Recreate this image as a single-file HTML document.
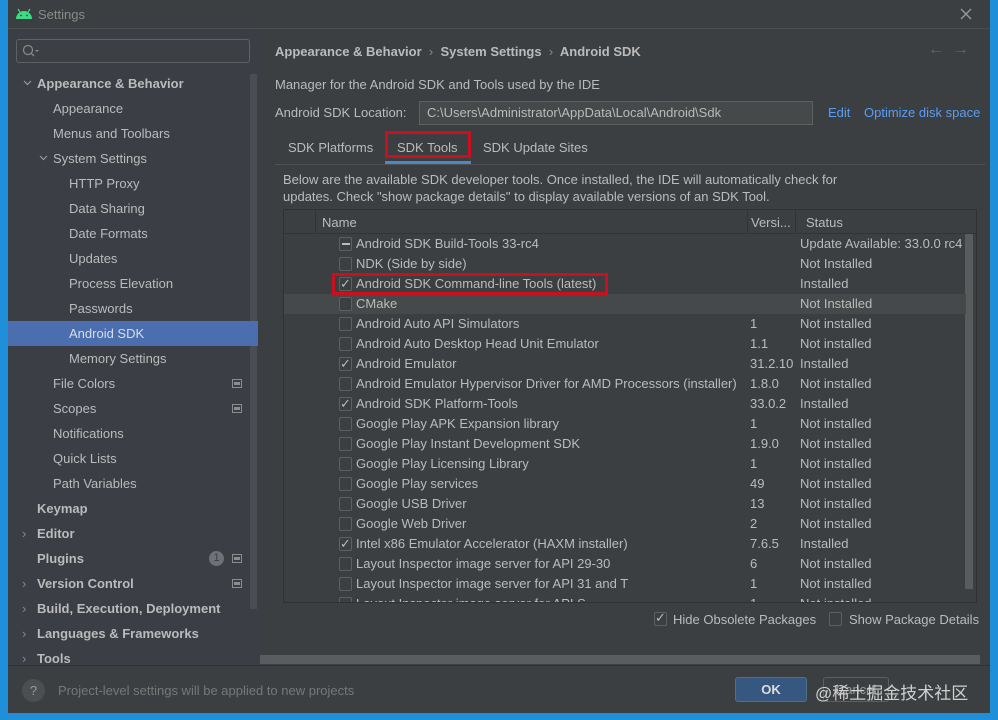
<!DOCTYPE html>
<html><head><meta charset="utf-8"><style>
*{margin:0;padding:0;box-sizing:border-box}
body{width:998px;height:720px;background:#1e8fd8;position:relative;overflow:hidden;font-family:"Liberation Sans",sans-serif;font-size:13px;color:#bbbbbb}
.a{position:absolute;white-space:nowrap}
#win{position:absolute;left:8px;top:0;width:982px;height:713px;background:#3c3f41}
#title{position:absolute;left:0;top:0;width:982px;height:29px;background:#3c3f41;border-bottom:1px solid #4a4d50}
#side{position:absolute;left:0;top:29px;width:252px;height:636px;background:#3b3e45}
.si{position:absolute;height:25px;line-height:25px;white-space:nowrap}
.b{font-weight:bold}
.n{font-family:"Liberation Sans Narrow","Liberation Sans",sans-serif}
.cb{position:absolute;width:13px;height:14px;border:1px solid #5e6060;background:#3c3f41;border-radius:2px}
.row{position:absolute;left:0;width:682px;height:20px;line-height:20px}
.ic{position:absolute;width:10px;height:9px;border:1px solid #8c8c8c}
.ic:after{content:"";position:absolute;left:1px;top:2px;width:6px;height:3px;background:#8c8c8c}
</style></head><body>
<div id="win">
 <div id="title">
  <svg class="a" style="left:7px;top:8px" width="18" height="11" viewBox="0 0 18 11"><path d="M1 11 A8 8 0 0 1 17 11 Z" fill="#3ddc84"/><path d="M3 1 L5 4 M15 1 L13 4" stroke="#3ddc84" stroke-width="1.2"/><circle cx="6" cy="7.5" r="0.9" fill="#3c3f41"/><circle cx="12" cy="7.5" r="0.9" fill="#3c3f41"/></svg>
  <div class="a" style="left:30px;top:7px;color:#8a8a8a">Settings</div>
  <svg class="a" style="left:952px;top:8px" width="12" height="12"><path d="M1 1 L11 11 M11 1 L1 11" stroke="#9a9a9a" stroke-width="1.3"/></svg>
 </div>
 <div id="side">
  <div class="a" style="left:8px;top:10px;width:234px;height:24px;border:1px solid #5e6166;border-radius:3px;background:#3c3f43"></div>
  <svg class="a" style="left:14px;top:15px" width="18" height="14"><circle cx="6" cy="6" r="4.5" stroke="#888" fill="none" stroke-width="1.3"/><path d="M9.5 9.5 L12 12" stroke="#888" stroke-width="1.3"/><path d="M13 6 L17 6 L15 8Z" fill="#888"/></svg>
  <div class="a" style="left:242px;top:45px;width:7px;height:535px;background:#4a4d52"></div>
  <div class="a" style="left:0;top:292px;width:250px;height:25px;background:#4b6eaf"></div>
 </div>
 <div style="position:absolute;left:0;top:29px">
  <svg class="a" style="left:15px;top:51px" width="9" height="6"><path d="M1 1 L4.5 4.5 L8 1" stroke="#999" fill="none" stroke-width="1.2"/></svg>
  <div class="si b" style="left:29px;top:42px">Appearance &amp; Behavior</div>
  <div class="si" style="left:45px;top:67px">Appearance</div>
  <div class="si" style="left:45px;top:92px">Menus and Toolbars</div>
  <svg class="a" style="left:31px;top:126px" width="9" height="6"><path d="M1 1 L4.5 4.5 L8 1" stroke="#999" fill="none" stroke-width="1.2"/></svg>
  <div class="si" style="left:45px;top:117px">System Settings</div>
  <div class="si" style="left:61px;top:142px">HTTP Proxy</div>
  <div class="si" style="left:61px;top:167px">Data Sharing</div>
  <div class="si" style="left:61px;top:192px">Date Formats</div>
  <div class="si" style="left:61px;top:217px">Updates</div>
  <div class="si" style="left:61px;top:242px">Process Elevation</div>
  <div class="si" style="left:61px;top:267px">Passwords</div>
  <div class="si" style="left:61px;top:292px;color:#d8dde6">Android SDK</div>
  <div class="si" style="left:61px;top:317px">Memory Settings</div>
  <div class="si" style="left:45px;top:342px">File Colors</div><div class="ic" style="left:224px;top:350px"></div>
  <div class="si" style="left:45px;top:367px">Scopes</div><div class="ic" style="left:224px;top:375px"></div>
  <div class="si" style="left:45px;top:392px">Notifications</div>
  <div class="si" style="left:45px;top:417px">Quick Lists</div>
  <div class="si" style="left:45px;top:442px">Path Variables</div>
  <div class="si b" style="left:29px;top:467px">Keymap</div>
  <div class="si" style="left:14px;top:492px;color:#888">›</div><div class="si b" style="left:29px;top:492px">Editor</div>
  <div class="si b" style="left:29px;top:517px">Plugins</div>
  <div class="a" style="left:201px;top:522px;width:15px;height:15px;border-radius:8px;background:#6e7276;color:#3c3f41;font-size:11px;text-align:center;line-height:15px">1</div><div class="ic" style="left:224px;top:525px"></div>
  <div class="si" style="left:14px;top:542px;color:#888">›</div><div class="si b" style="left:29px;top:542px">Version Control</div><div class="ic" style="left:224px;top:550px"></div>
  <div class="si" style="left:14px;top:567px;color:#888">›</div><div class="si b" style="left:29px;top:567px">Build, Execution, Deployment</div>
  <div class="si" style="left:14px;top:592px;color:#888">›</div><div class="si b" style="left:29px;top:592px">Languages &amp; Frameworks</div>
  <div class="si" style="left:14px;top:617px;color:#888">›</div><div class="si b" style="left:29px;top:617px">Tools</div>
 </div>
 <div class="a b" style="left:267px;top:44px">Appearance &amp; Behavior &nbsp;<span style="color:#888;font-weight:normal">›</span>&nbsp; System Settings &nbsp;<span style="color:#888;font-weight:normal">›</span>&nbsp; Android SDK</div>
 <div class="a" style="left:920px;top:41px;color:#666;font-size:16px">←&nbsp;&nbsp;→</div>
 <div class="a" style="left:267px;top:77px">Manager for the Android SDK and Tools used by the IDE</div>
 <div class="a" style="left:267px;top:105px">Android SDK Location:</div>
 <div class="a" style="left:411px;top:101px;width:394px;height:24px;border:1px solid #5e6060;background:#45494a;padding:3px 0 0 7px">C:\Users\Administrator\AppData\Local\Android\Sdk</div>
 <div class="a" style="left:820px;top:105px;color:#589df6">Edit</div>
 <div class="a" style="left:856px;top:105px;color:#589df6">Optimize disk space</div>
 <div class="a" style="left:267px;top:164px;width:710px;height:1px;background:#515151"></div>
 <div class="a" style="left:280px;top:140px">SDK Platforms</div>
 <div class="a" style="left:389px;top:140px">SDK Tools</div>
 <div class="a" style="left:377px;top:161px;width:86px;height:3px;background:#4a88c7"></div>
 <div class="a" style="left:377px;top:131px;width:86px;height:27px;border:3px solid #c8101e"></div>
 <div class="a" style="left:475px;top:140px">SDK Update Sites</div>
 <div class="a" style="left:275px;top:171px;line-height:17px;white-space:normal;width:580px">Below are the available SDK developer tools. Once installed, the IDE will automatically check for updates. Check "show package details" to display available versions of an SDK Tool.</div>
 <div class="a n" style="left:275px;top:209px;width:694px;height:394px;border:1px solid #2f3133;overflow:hidden;background:#3c3f41">
  <div class="a" style="left:0;top:0;width:692px;height:24px;background:#3c3f41;border-bottom:1px solid #333"></div>
  <div class="a" style="left:31px;top:0;width:1px;height:24px;background:#333"></div>
  <div class="a" style="left:463px;top:0;width:1px;height:24px;background:#333"></div>
  <div class="a" style="left:511px;top:0;width:1px;height:24px;background:#333"></div>
  <div class="a" style="left:38px;top:5px">Name</div>
  <div class="a" style="left:467px;top:5px">Versi...</div>
  <div class="a" style="left:522px;top:5px">Status</div>
  <div class="a" style="left:681px;top:24px;width:8px;height:355px;background:#595b5d"></div>
  <div id="rows" style="position:absolute;left:0;top:24px"></div>
 </div>
 <div class="a" style="left:324px;top:273px;width:276px;height:22px;border:3px solid #c8101e"></div>
 <div class="cb" style="left:646px;top:612px"></div><div class="a" style="left:647px;top:610px;color:#bbb">✓</div>
 <div class="a n" style="left:665px;top:612px">Hide Obsolete Packages</div>
 <div class="cb" style="left:821px;top:612px"></div>
 <div class="a n" style="left:841px;top:612px">Show Package Details</div>
 <div class="a" style="left:252px;top:655px;width:720px;height:9px;background:#5a5d5f"></div>
 <div class="a" style="left:0;top:665px;width:982px;height:48px;background:#3c3f41;border-top:1px solid #323232"></div>
 <div class="a" style="left:14px;top:679px;width:23px;height:23px;border-radius:12px;background:#4c4f51;color:#999;text-align:center;line-height:23px">?</div>
 <div class="a n" style="left:50px;top:683px;color:#777">Project-level settings will be applied to new projects</div>
 <div class="a b" style="left:727px;top:677px;width:72px;height:25px;background:#365880;border:1px solid #4c708c;border-radius:3px;text-align:center;line-height:23px;color:#ddd">OK</div>
 <div class="a" style="left:815px;top:677px;width:66px;height:25px;border:1px solid #5e6060;border-radius:3px;text-align:center;line-height:23px;color:#999">Cancel</div>
 <div class="a" style="left:807px;top:679px;color:#d0d0d0;font-family:'Liberation Sans','Noto Sans CJK SC',sans-serif;font-size:17px">@稀土掘金技术社区</div>
</div>
<script>
var d=[["m","Android SDK Build-Tools 33-rc4","","Update Available: 33.0.0 rc4"],["","NDK (Side by side)","","Not Installed"],["c","Android SDK Command-line Tools (latest)","","Installed"],["","CMake","","Not Installed"],["","Android Auto API Simulators","1","Not installed"],["","Android Auto Desktop Head Unit Emulator","1.1","Not installed"],["c","Android Emulator","31.2.10","Installed"],["","Android Emulator Hypervisor Driver for AMD Processors (installer)","1.8.0","Not installed"],["c","Android SDK Platform-Tools","33.0.2","Installed"],["","Google Play APK Expansion library","1","Not installed"],["","Google Play Instant Development SDK","1.9.0","Not installed"],["","Google Play Licensing Library","1","Not installed"],["","Google Play services","49","Not installed"],["","Google USB Driver","13","Not installed"],["","Google Web Driver","2","Not installed"],["c","Intel x86 Emulator Accelerator (HAXM installer)","7.6.5","Installed"],["","Layout Inspector image server for API 29-30","6","Not installed"],["","Layout Inspector image server for API 31 and T","1","Not installed"],["","Layout Inspector image server for API S","1","Not installed"]];
var h="";d.forEach(function(r,i){var t=i*20;h+='<div class="row" style="top:'+t+'px;'+(i==3?'background:#45494a;':'')+'">';h+='<div class="cb" style="left:55px;top:3px"></div>';if(r[0]=="c")h+='<div class="a" style="left:56px;top:0;color:#bbb">✓</div>';if(r[0]=="m")h+='<div class="a" style="left:58px;top:9px;width:8px;height:2px;background:#bbb"></div>';h+='<div class="a" style="left:72px;top:0">'+r[1]+'</div><div class="a" style="left:466px;top:0">'+r[2]+'</div><div class="a" style="left:516px;top:0">'+r[3]+'</div></div>';});
document.getElementById("rows").innerHTML=h;
</script>
</body></html>
